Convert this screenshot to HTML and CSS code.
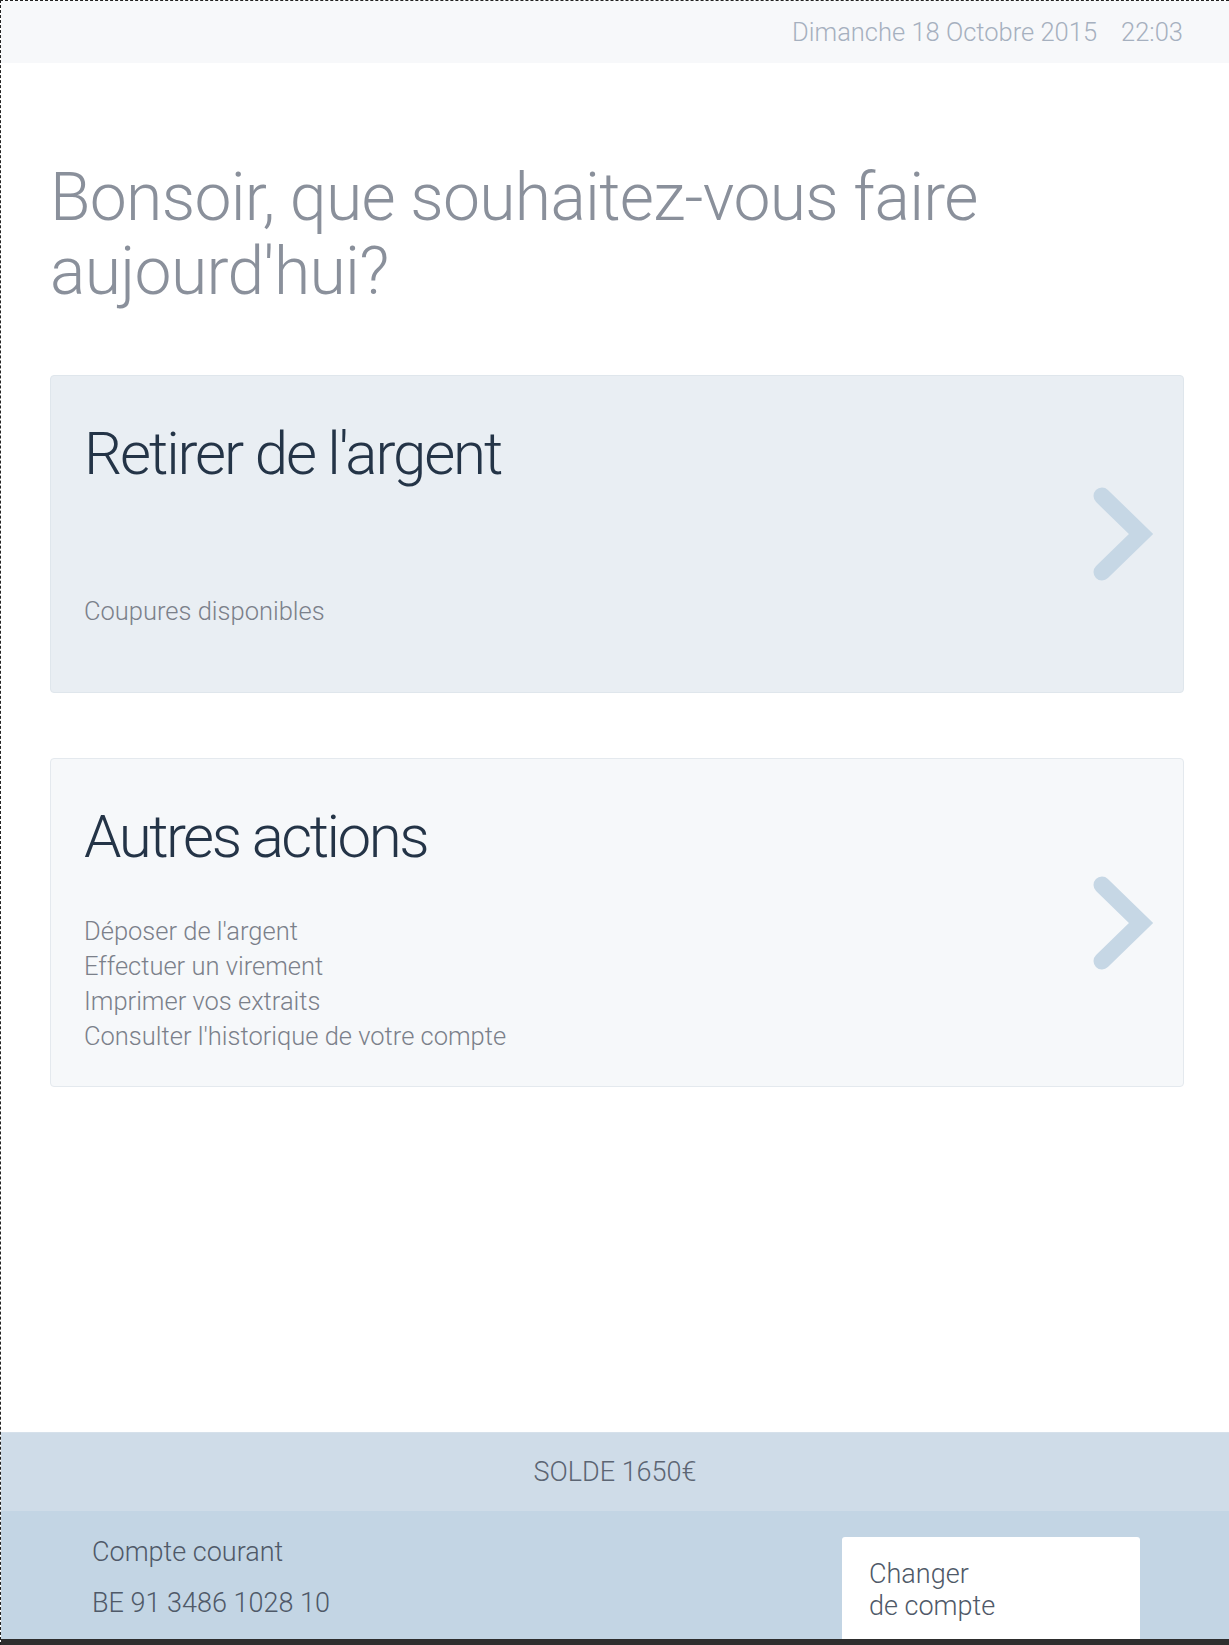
FILE: index.html
```html
<!DOCTYPE html>
<html lang="fr">
<head>
<meta charset="utf-8">
<title>Accueil</title>
<link rel="stylesheet" href="styles.css">
</head>
<body>
<div class="screen">
  <header class="topbar">
    <span class="date">Dimanche 18 Octobre 2015</span>
    <span class="time">22:03</span>
  </header>
  <main class="content">
    <h1 class="greeting">Bonsoir, que souhaitez-vous faire aujourd'hui?</h1>
    <a class="card card-primary" href="#">
      <div class="card-body">
        <h2 class="card-title title-gap-lg">Retirer de l'argent</h2>
        <ul class="card-list">
          <li>Coupures disponibles</li>
        </ul>
      </div>
      <svg class="chevron" viewBox="0 0 64 96" width="64" height="96" aria-hidden="true">
        <polyline points="11,10 50,48 11,86" fill="none" stroke="#c6d7e5" stroke-width="17" stroke-linecap="round" stroke-linejoin="miter"/>
      </svg>
    </a>
    <a class="card card-secondary" href="#">
      <div class="card-body">
        <h2 class="card-title title-gap-sm">Autres actions</h2>
        <ul class="card-list">
          <li>Déposer de l'argent</li>
          <li>Effectuer un virement</li>
          <li>Imprimer vos extraits</li>
          <li>Consulter l'historique de votre compte</li>
        </ul>
      </div>
      <svg class="chevron" viewBox="0 0 64 96" width="64" height="96" aria-hidden="true">
        <polyline points="11,10 50,48 11,86" fill="none" stroke="#c6d7e5" stroke-width="17" stroke-linecap="round" stroke-linejoin="miter"/>
      </svg>
    </a>
  </main>
  <footer class="footer">
    <div class="solde">SOLDE 1650€</div>
    <div class="account">
      <div class="account-info">
        <div>Compte courant</div>
        <div>BE 91 3486 1028 10</div>
      </div>
      <a class="switch-btn" href="#">Changer<br>de compte</a>
    </div>
    <div class="bottom-edge"></div>
  </footer>
</div>
</body>
</html>
```

FILE: styles.css
```css
* {
  box-sizing: border-box;
}

html, body {
  margin: 0;
  padding: 0;
  background: #ffffff;
}

body {
  font-family: Roboto, "Liberation Sans", sans-serif;
  font-weight: 300;
}

.screen {
  height: 1645px;
  display: flex;
  flex-direction: column;
  border-top: 1px dashed #222;
  border-left: 1px dashed #222;
  overflow: hidden;
}

.topbar {
  height: 62px;
  flex: 0 0 auto;
  background: #f7f8fa;
  display: flex;
  justify-content: flex-end;
  align-items: center;
  gap: 24px;
  padding: 0 46px 0 0;
  font-size: 25.5px;
  color: #a6b0bf;
}

.content {
  padding: 0 45px 0 49px;
  display: flex;
  flex-direction: column;
}

.greeting {
  margin: 98px 0 66px;
  font-size: 66px;
  line-height: 74px;
  font-weight: 300;
  letter-spacing: -0.7px;
  color: #8a909b;
  max-width: 1000px;
}

.card {
  display: flex;
  align-items: center;
  text-decoration: none;
  border-radius: 4px;
  padding: 42px 28px 0 33px;
}

.card-primary {
  background: #e9eef3;
  border: 1px solid #dfe6ec;
  padding-bottom: 63px;
  margin-bottom: 65px;
}

.card-secondary {
  background: #f6f8fa;
  border: 1px solid #e4e9ee;
  padding-bottom: 32px;
}

.card-body {
  flex: 1 1 auto;
  align-self: flex-start;
}

.card-title {
  margin: 0;
  font-size: 60px;
  line-height: 72px;
  font-weight: 300;
  letter-spacing: -2.1px;
  color: #243447;
}

.title-gap-lg {
  margin-bottom: 104px;
}

.title-gap-sm {
  margin-bottom: 41px;
  letter-spacing: -2.5px;
}

.card-list {
  list-style: none;
  margin: 0;
  padding: 0;
  font-size: 25.5px;
  line-height: 35px;
  color: #7b808a;
}

.chevron {
  flex: 0 0 auto;
  display: block;
}

.card-primary .chevron {
  margin-top: -42px;
  margin-bottom: -63px;
}

.card-secondary .chevron {
  margin-top: -42px;
  margin-bottom: -32px;
}

.footer {
  margin-top: auto;
  display: flex;
  flex-direction: column;
}

.solde {
  height: 79px;
  background: #cfdce8;
  border-top: 1px solid #d6e1eb;
  display: flex;
  align-items: center;
  justify-content: center;
  font-size: 27px;
  color: #5c6573;
}

.account {
  height: 128px;
  background: #c3d5e4;
  display: flex;
  justify-content: space-between;
  align-items: flex-start;
  padding: 0 89px 0 91px;
  overflow: hidden;
}

.account-info {
  padding-top: 16px;
  font-size: 27px;
  line-height: 51px;
  color: #4f5968;
}

.switch-btn {
  display: block;
  margin-top: 26px;
  width: 298px;
  height: 120px;
  background: #ffffff;
  border-radius: 3px;
  padding: 21px 0 0 27px;
  text-decoration: none;
  font-size: 27px;
  line-height: 32px;
  color: #4f5968;
}

.bottom-edge {
  height: 6px;
  background: #2e2e2e;
}
```
